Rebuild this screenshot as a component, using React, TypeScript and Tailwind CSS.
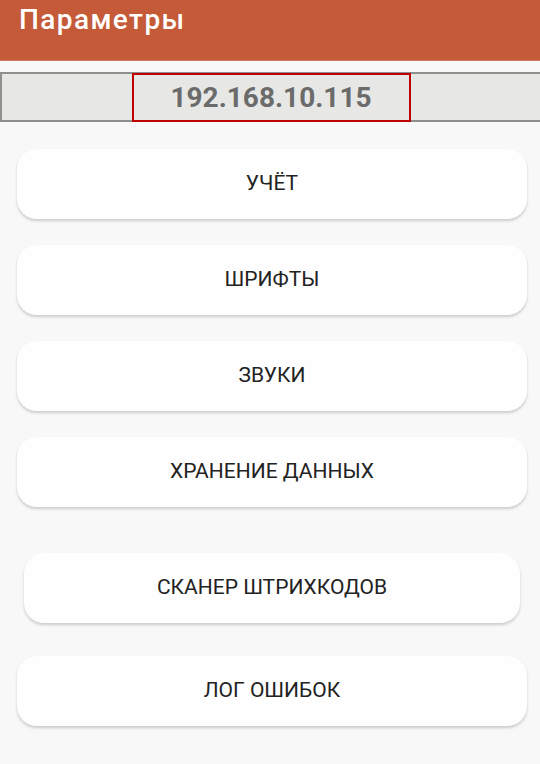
const buttons: { label: string; className: string }[] = [
  { label: "УЧЁТ", className: "mt-[27px]" },
  { label: "ШРИФТЫ", className: "mt-[26px]" },
  { label: "ЗВУКИ", className: "mt-[26px]" },
  { label: "ХРАНЕНИЕ ДАННЫХ", className: "mt-[26px]" },
  { label: "СКАНЕР ШТРИХКОДОВ", className: "mt-[46px] mx-[7px]" },
  { label: "ЛОГ ОШИБОК", className: "mt-[33px]" },
];

export default function App() {
  return (
    <div className="w-[540px] h-[764px] overflow-hidden bg-[#f7f8f7] font-['Roboto',sans-serif]">
      <header className="h-[61px] bg-[#c45a37] pl-[19px] pt-[3px] border-b border-[#d07a5c]">
        <h1 className="text-[28px] leading-[34px] font-medium tracking-[1.4px] text-white">Параметры</h1>
      </header>

      <div className="mt-[11px] h-[50px] bg-[#e7e8e6] border-y-2 border-l-2 border-[#8e908e] flex justify-center items-stretch">
        <div className="w-[279px] -mt-px -mb-[2px] border-2 border-[#c00000] flex items-center justify-center">
          <span className="text-[28px] leading-none font-bold text-[#6b6b6b]">192.168.10.115</span>
        </div>
      </div>

      <div className="pl-[17px] pr-[13px] flex flex-col">
        {buttons.map((b) => (
          <button
            key={b.label}
            className={`${b.className} h-[70px] rounded-[20px] bg-[#fdfefd] shadow-[0_2px_3px_rgba(0,0,0,0.18)] flex items-center justify-center text-[21px] text-[#222222]`}
          >
            {b.label}
          </button>
        ))}
      </div>
    </div>
  );
}
